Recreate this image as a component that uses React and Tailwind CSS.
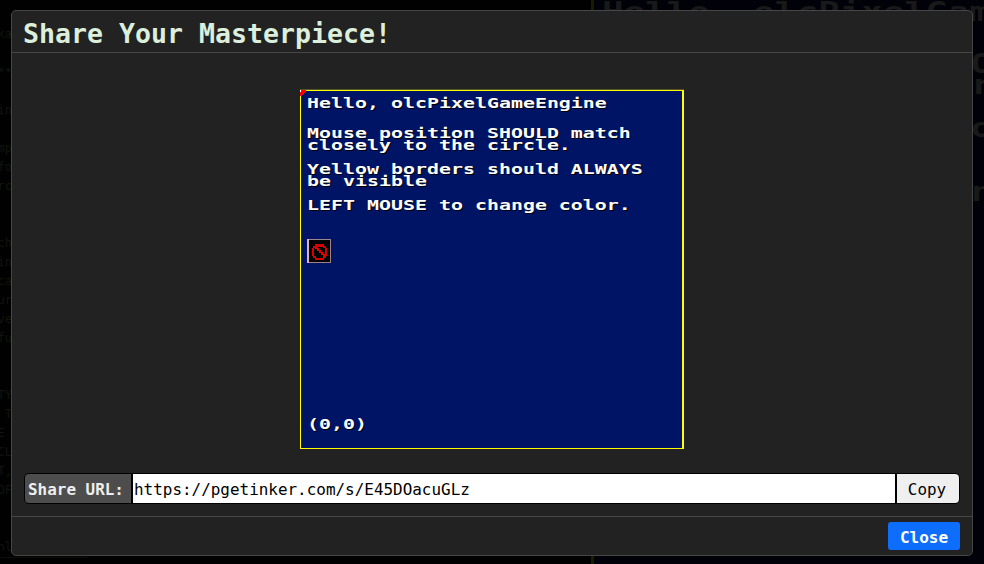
const editorRows = [
  'ka', '', '**', '', 'in', '', 'mp', 'fo', 'rc', '', '', 'ch', 'in', 'ca', 'ur', 've', 'fu',
  '', '', 'TY', ' T', 'E ', 'CL', 'T,', 'OF', '', '', 'nl',
];

function EditorBackdrop() {
  return (
    <div className="w-[591px] shrink-0 bg-[#010101] pt-[25px] text-[12px] leading-[19px] text-[#10150e]">
      {editorRows.map((row, i) => (
        <div key={i} className="-ml-[2.5px] h-[19px] whitespace-pre">{row}</div>
      ))}
      <div className="h-[7px] w-[88px] border-t border-[#0b0d06]" />
    </div>
  );
}

function CanvasBackdrop() {
  return (
    <div className="relative grow border-l-[3px] border-[#1b1b00] bg-[#000109] font-bold text-[#191919]">
      <div className="absolute left-[8px] -top-[1px] origin-top-left scale-y-[0.74] whitespace-pre text-[35.9px] leading-[36px]">Hello, olcPixelGam</div>
      <div className="absolute left-[377px] top-[51px] origin-top-left scale-y-[0.72] text-[35.9px] leading-[36px]">O</div>
      <div className="absolute left-[377px] top-[72px] origin-top-left scale-y-[0.72] text-[35.9px] leading-[36px]">r</div>
      <div className="absolute left-[377px] top-[115px] origin-top-left scale-y-[0.72] text-[35.9px] leading-[36px]">o</div>
      <div className="absolute left-[377px] top-[179px] origin-top-left scale-y-[0.72] text-[35.9px] leading-[36px]">n</div>
    </div>
  );
}

function PixelLine({ children }) {
  return (
    <div className="h-3 w-max origin-top-left scale-y-[0.72] whitespace-pre leading-[18px]">{children}</div>
  );
}

function BlockedSprite() {
  return (
    <svg className="block h-6 w-6" viewBox="0 0 24 24" shapeRendering="crispEdges">
      <rect width="24" height="24" fill="#a08088" />
      <rect width="24" height="1" fill="#a08490" />
      <rect width="2" height="24" fill="#dfb0b8" />
      <rect x="2" y="1" width="21" height="22" fill="#000" />
      <path d="M8 5h9v2h2v2h1v8h-1v2h-2v2H8v-2H6v-2H5V9h1V7h2z M9 8v1H7v8h2v2h7v-1h2V9h-2V8z" fill="#d90000" fillRule="evenodd" />
      <path d="M8 8h2v1h2v2h2v2h2v2h2v3h-2v-2h-2v-2h-2v-2h-2v-2H8z" fill="#ef0000" />
    </svg>
  );
}

function GamePreview() {
  return (
    <div className="relative h-[359px] w-[384px] border border-r-2 border-[#ffff00] bg-[#001465] pl-[6px] pt-[6px] text-[19.93px] font-bold text-white shadow-[0_-1px_0_#55551c] [text-shadow:1px_2px_0_#000]">
      <svg className="absolute -left-px -top-px h-[6px] w-[6px]" viewBox="0 0 6 6" shapeRendering="crispEdges">
        <path d="M0 0h6v2H5v1H4v1H3v1H2v1H0z" fill="#f00" />
        <path d="M0 0h1v2H0z" fill="#fff" />
      </svg>
      <PixelLine>Hello, olcPixelGameEngine</PixelLine>
      <div className="mt-[18px]">
        <PixelLine>Mouse position SHOULD match</PixelLine>
        <PixelLine>closely to the circle.</PixelLine>
      </div>
      <div className="mt-3">
        <PixelLine>Yellow borders should ALWAYS</PixelLine>
        <PixelLine>be visible</PixelLine>
      </div>
      <div className="mt-3">
        <PixelLine>LEFT MOUSE to change color.</PixelLine>
      </div>
      <div className="mt-[28px]">
        <BlockedSprite />
      </div>
      <div className="mt-[155px]">
        <PixelLine>(0,0)</PixelLine>
      </div>
    </div>
  );
}

export default function App() {
  return (
    <div className="relative h-[564px] w-[984px] overflow-hidden bg-black font-['DejaVu_Sans_Mono',monospace]">
      <div className="flex h-full">
        <EditorBackdrop />
        <CanvasBackdrop />
      </div>
      <div className="absolute left-[11px] top-[10px] flex h-[546px] w-[962px] flex-col rounded-[5px] border border-[#464646] bg-[#222]">
        <header className="flex h-[42px] shrink-0 items-center border-b border-[#464646] pl-[11px] pt-[5px]">
          <h1 className="whitespace-pre text-[26.58px] font-bold leading-[32px] text-[#dcefdc]">Share Your Masterpiece!</h1>
        </header>
        <main className="flex grow flex-col items-center px-3 pt-[37px]">
          <GamePreview />
          <div className="mt-[24px] flex h-[31px] w-[936px] overflow-hidden rounded-[5px] border border-black bg-black text-[15.95px]">
            <label className="flex w-[106px] items-center whitespace-pre bg-[#4d4d4d] pl-[3px] pt-[2px] font-bold text-[#eee]">Share URL:</label>
            <div className="ml-[2px] flex w-[762px] items-center bg-white pl-px pt-[2px] text-black">https://pgetinker.com/s/E45DOacuGLz</div>
            <button className="ml-[2px] flex grow items-center justify-center bg-[#efefef] pr-[2px] pt-[3px] text-black">Copy</button>
          </div>
        </main>
        <footer className="flex h-[39px] shrink-0 items-start justify-end border-t border-[#464646] pr-3 pt-[5px]">
          <button className="flex h-[28px] w-[72px] items-center justify-center rounded-[3px] bg-[#0d6efd] pt-[4px] text-[16px] font-bold text-white">Close</button>
        </footer>
      </div>
    </div>
  );
}
